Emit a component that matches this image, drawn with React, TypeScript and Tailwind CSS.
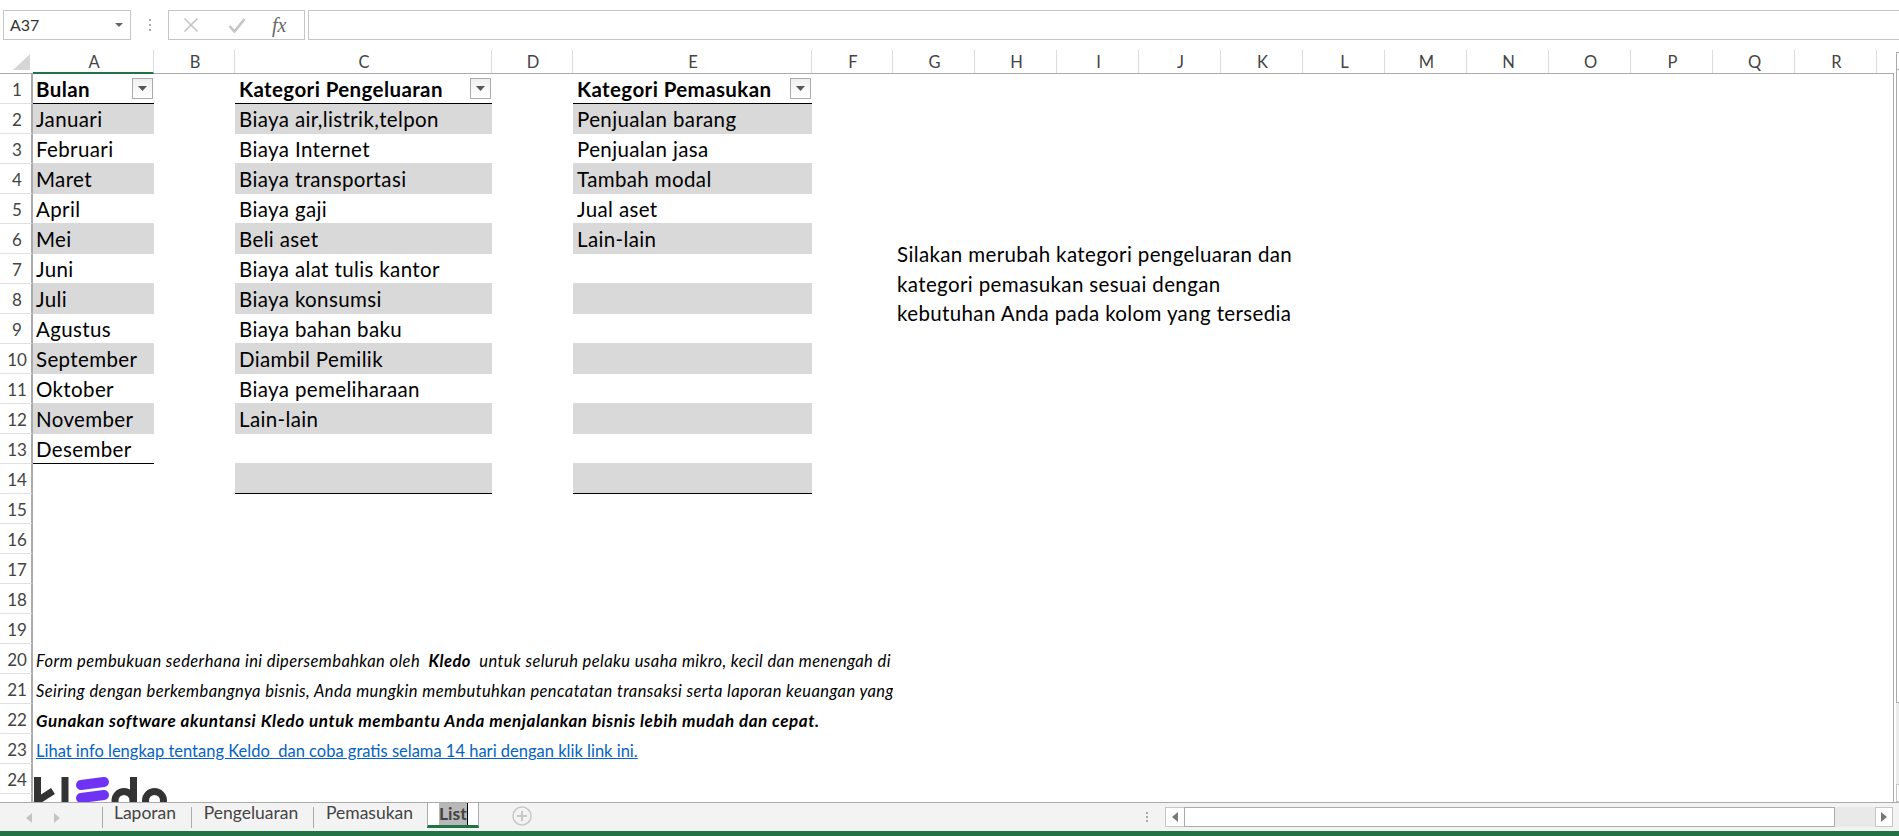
const COLUMNS = [
  { label: "A", width: "w-[121px]" },
  { label: "B", width: "w-[81px]" },
  { label: "C", width: "w-[257px]" },
  { label: "D", width: "w-[81px]" },
  { label: "E", width: "w-[239px]" },
  { label: "F", width: "w-[81px]" },
  { label: "G", width: "w-[82px]" },
  { label: "H", width: "w-[82px]" },
  { label: "I", width: "w-[82px]" },
  { label: "J", width: "w-[82px]" },
  { label: "K", width: "w-[82px]" },
  { label: "L", width: "w-[82px]" },
  { label: "M", width: "w-[82px]" },
  { label: "N", width: "w-[82px]" },
  { label: "O", width: "w-[82px]" },
  { label: "P", width: "w-[82px]" },
  { label: "Q", width: "w-[82px]" },
  { label: "R", width: "w-[82px]" },
];

const BULAN = ["Januari", "Februari", "Maret", "April", "Mei", "Juni", "Juli", "Agustus", "September", "Oktober", "November", "Desember"];
const PENGELUARAN = ["Biaya air,listrik,telpon", "Biaya Internet", "Biaya transportasi", "Biaya gaji", "Beli aset", "Biaya alat tulis kantor", "Biaya konsumsi", "Biaya bahan baku", "Diambil Pemilik", "Biaya pemeliharaan", "Lain-lain", "", ""];
const PEMASUKAN = ["Penjualan barang", "Penjualan jasa", "Tambah modal", "Jual aset", "Lain-lain", "", "", "", "", "", "", "", ""];

function FilterButton() {
  return (
    <span className="mr-px flex h-[21px] w-[21px] shrink-0 items-center justify-center border border-[#ababab] bg-gradient-to-b from-[#f0f0f0] to-white">
      <svg width="9" height="5" viewBox="0 0 9 5"><path d="M0 0h9L4.5 5z" fill="#555" /></svg>
    </span>
  );
}

function HeaderCell({ width, label, indent }: { width: string; label: string; indent: string }) {
  return (
    <div className={`${width} ${indent} flex h-[30px] items-center justify-between border-b border-black`}>
      <span className="pt-[2px] text-[20.5px] font-bold tracking-[0.4px] text-black">{label}</span>
      <FilterButton />
    </div>
  );
}

function DataCell({ width, text, row, last, shadeAll, indent }: { width: string; text: string; row: number; last: boolean; shadeAll: boolean; indent: string }) {
  const shaded = shadeAll && row % 2 === 0;
  const offset = shaded && row > 2 ? "-mt-px h-[31px] pt-[2px]" : "h-[30px] pt-[1px]";
  return (
    <div className={`${width} ${offset} ${indent} flex items-center text-[20.5px] tracking-[0.37px] text-black ${shaded ? "bg-[#d9d9d9]" : ""} ${last ? "border-b border-black" : ""}`}>
      {text}
    </div>
  );
}

function RowHeader({ n }: { n?: number }) {
  return (
    <div className="flex h-[30px] w-[33px] shrink-0 items-center justify-center border-r-2 border-b border-r-[#ababab] border-b-[#e1e1e1] pl-[3px] pt-[3px] text-[17px] text-[#444]">
      {n}
    </div>
  );
}

function Row({ n, children }: { n?: number; children?: React.ReactNode }) {
  return (
    <div className="flex h-[30px] items-start">
      <RowHeader n={n} />
      {children}
    </div>
  );
}

function FormulaBar() {
  return (
    <div className="flex h-[50px] shrink-0 items-start bg-white pt-[10px]">
      <div className="ml-[3px] flex h-[30px] w-[128px] items-center justify-between border border-[#c6c6c6] pl-[6px] pr-[7px] text-[16px] text-[#333]">
        A37
        <svg width="8" height="4" viewBox="0 0 8 4"><path d="M0 0h8L4 4z" fill="#666" /></svg>
      </div>
      <div className="flex h-[30px] w-[37px] flex-col items-center justify-center gap-[3px]">
        <span className="h-[2px] w-[2px] bg-[#aaa]" />
        <span className="h-[2px] w-[2px] bg-[#aaa]" />
        <span className="h-[2px] w-[2px] bg-[#aaa]" />
      </div>
      <div className="flex h-[30px] w-[137px] items-center border border-[#c6c6c6] pl-[14px]">
        <svg width="16" height="16" viewBox="0 0 16 16" className="shrink-0">
          <path d="M1.5 1.5l13 13M14.5 1.5l-13 13" stroke="#c4c4c4" strokeWidth="1.6" fill="none" />
        </svg>
        <svg width="18" height="16" viewBox="0 0 18 16" className="ml-[29px] shrink-0">
          <path d="M1.5 9l5 5.5L16.5 2" stroke="#c4c4c4" strokeWidth="2.6" fill="none" />
        </svg>
        <span className="ml-[26px] font-['Liberation_Serif',serif] text-[20px] leading-none text-[#666] italic">fx</span>
      </div>
      <div className="ml-[3px] h-[30px] flex-1 border-y border-l border-[#c6c6c6]" />
    </div>
  );
}

function ColumnHeaders() {
  return (
    <div className="flex h-[24px] shrink-0 items-stretch border-b border-[#ababab]">
      <div className="flex w-[33px] shrink-0 items-end justify-end pb-[3px] pr-[3px]">
        <svg width="17" height="16" viewBox="0 0 17 16"><path d="M17 0v16H0z" fill="#d6d6d6" /></svg>
      </div>
      {COLUMNS.map((col, i) => (
        <div
          key={col.label}
          className={`${col.width} flex items-center justify-center border-r border-[#dcdcdc] pl-[2px] pt-[2px] text-[16.5px] text-[#444] ${i === 0 ? "-mb-px border-b-2 border-b-[#217346]" : ""}`}
        >
          {col.label}
        </div>
      ))}
    </div>
  );
}

function KledoLogo() {
  return (
    <svg className="absolute left-[30px] top-[702px]" width="145" height="40" viewBox="0 0 145 40">
      <g fill="none" stroke="#333" strokeWidth="7">
        <path d="M7.5 1v40" />
        <path d="M9 24l14-9" />
        <path d="M35 1v40" />
        <circle cx="94" cy="24.5" r="9" />
        <path d="M103.5 1v34" />
        <circle cx="124.5" cy="24.5" r="9" />
      </g>
      <g fill="none" stroke="#7033f5" strokeWidth="10" strokeLinecap="round">
        <path d="M51 9l23-3" />
        <path d="M51 22l23-3" />
      </g>
    </svg>
  );
}

function Sheet() {
  return (
    <div className="relative flex-1 overflow-hidden border-r border-[#ababab] bg-white">
      <Row n={1}>
        <HeaderCell width={COLUMNS[0].width} indent="pl-[3px]" label="Bulan" />
        <div className={COLUMNS[1].width} />
        <HeaderCell width={COLUMNS[2].width} indent="pl-[4px]" label="Kategori Pengeluaran" />
        <div className={COLUMNS[3].width} />
        <HeaderCell width={COLUMNS[4].width} indent="pl-[4px]" label="Kategori Pemasukan" />
      </Row>
      {PENGELUARAN.map((item, i) => {
        const n = i + 2;
        return (
          <Row key={n} n={n}>
            <DataCell width={COLUMNS[0].width} indent="pl-[3px]" text={BULAN[i] ?? ""} row={n} last={n === 13} shadeAll={n <= 13} />
            <div className={COLUMNS[1].width} />
            <DataCell width={COLUMNS[2].width} indent="pl-[4px]" text={item} row={n} last={n === 14} shadeAll />
            <div className={COLUMNS[3].width} />
            <DataCell width={COLUMNS[4].width} indent="pl-[4px]" text={PEMASUKAN[i]} row={n} last={n === 14} shadeAll />
          </Row>
        );
      })}
      {[15, 16, 17, 18, 19].map((n) => (
        <Row key={n} n={n} />
      ))}
      <Row n={20}>
        <div className="flex h-[30px] w-[860px] items-center overflow-hidden whitespace-pre pl-[3px] pt-[4px] text-[16.5px] tracking-[0.41px] text-black italic">
          Form pembukuan sederhana ini dipersembahkan oleh  <b>Kledo</b>  untuk seluruh pelaku usaha mikro, kecil dan menengah di
        </div>
      </Row>
      <Row n={21}>
        <div className="flex h-[30px] w-[860px] items-center overflow-hidden whitespace-pre pl-[3px] pt-[4px] text-[16.5px] tracking-[0.42px] text-black italic">
          Seiring dengan berkembangnya bisnis, Anda mungkin membutuhkan pencatatan transaksi serta laporan keuangan yang
        </div>
      </Row>
      <Row n={22}>
        <div className="flex h-[30px] w-[860px] items-center overflow-hidden whitespace-pre pl-[3px] pt-[4px] text-[17px] font-bold tracking-[0.56px] text-black italic">
          Gunakan software akuntansi Kledo untuk membantu Anda menjalankan bisnis lebih mudah dan cepat.
        </div>
      </Row>
      <Row n={23}>
        <div className="flex h-[30px] w-[860px] items-center overflow-hidden whitespace-pre pl-[3px] pt-[4px] text-[16.5px] text-[#0563c1] underline">
          Lihat info lengkap tentang Keldo  dan coba gratis selama 14 hari dengan klik link ini.
        </div>
      </Row>
      <Row n={24} />
      <Row />
      <div className="absolute left-[897px] top-[165px] pt-px text-[20.5px] leading-[29.7px] tracking-[0.37px] text-black">
        <p>Silakan merubah kategori pengeluaran dan</p>
        <p>kategori pemasukan sesuai dengan</p>
        <p>kebutuhan Anda pada kolom yang tersedia</p>
      </div>
      <KledoLogo />
    </div>
  );
}

function VerticalScrollbar() {
  return (
    <div className="flex w-[5px] shrink-0 flex-col items-end bg-white pt-[2px]">
      <div className="h-[18px] w-[3px] border-y border-l border-[#ababab]" />
      <div className="h-[633px] w-[3px] border-b border-l border-[#ababab] bg-white" />
      <div className="h-[81px] w-[3px] bg-[#ececec]" />
      <div className="h-[18px] w-[3px] border-y border-l border-[#c6c6c6] bg-white" />
    </div>
  );
}

function Tab({ label, width, inset, divider }: { label: string; width: string; inset: string; divider: boolean }) {
  return (
    <div className={`${width} ${inset} ${divider ? "border-r border-[#ababab]" : ""} flex h-[21px] items-center justify-center pb-[8px] text-[17.5px] text-[#444]`}>
      {label}
    </div>
  );
}

function TabBar() {
  return (
    <div className="flex h-[29px] shrink-0 items-start border-t border-[#ababab] bg-[#f3f3f3] pr-[6px]">
      <div className="mt-[4px] flex h-[21px] w-[103px] items-center border-r border-[#ababab] pl-[25px]">
        <svg width="8" height="12" viewBox="0 0 8 12"><path d="M7 1v10L1 6z" fill="#c4c4c4" /></svg>
        <svg className="ml-[20px]" width="8" height="12" viewBox="0 0 8 12"><path d="M1 1v10l6-5z" fill="#c4c4c4" /></svg>
      </div>
      <div className="mt-[4px] flex">
        <Tab label="Laporan" width="w-[89px]" inset="pr-[4px]" divider />
        <Tab label="Pengeluaran" width="w-[122px]" inset="pr-[3px]" divider />
        <Tab label="Pemasukan" width="w-[113px]" inset="pr-[2px]" divider={false} />
      </div>
      <div className="-mt-px flex h-[26px] w-[52px] items-start border-x border-t border-b-[3px] border-x-[#ababab] border-t-[#ababab] border-b-[#217346] bg-white pl-[11px]">
        <span className="h-[22px] bg-[#b8b8b8] text-[17.5px] leading-[22px] font-bold text-[#444]">List</span>
        <span className="h-[22px] w-px bg-black" />
      </div>
      <svg className="ml-[33px] mt-[3px]" width="20" height="20" viewBox="0 0 20 20">
        <circle cx="10" cy="10" r="9" fill="none" stroke="#c8c8c8" strokeWidth="1.5" />
        <path d="M10 5v10M5 10h10" stroke="#c8c8c8" strokeWidth="2" />
      </svg>
      <div className="ml-[614px] mt-[8px] flex h-[12px] flex-col items-center justify-center gap-[2px]">
        <span className="h-[2px] w-[2px] bg-[#aaa]" />
        <span className="h-[2px] w-[2px] bg-[#aaa]" />
        <span className="h-[2px] w-[2px] bg-[#aaa]" />
      </div>
      <div className="ml-auto mt-[4px] flex h-[20px] w-[728px]">
        <div className="flex w-[19px] items-center justify-center border border-r-0 border-[#c6c6c6] bg-white">
          <svg width="6" height="10" viewBox="0 0 6 10"><path d="M6 0v10L0 5z" fill="#777" /></svg>
        </div>
        <div className="w-[651px] border border-[#ababab] bg-white" />
        <div className="flex-1 bg-[#e9e9e9]" />
        <div className="flex w-[18px] items-center justify-center border border-[#c6c6c6] bg-white">
          <svg width="6" height="10" viewBox="0 0 6 10"><path d="M0 0v10l6-5z" fill="#777" /></svg>
        </div>
      </div>
    </div>
  );
}

export default function App() {
  return (
    <div className="flex h-[836px] w-[1899px] flex-col overflow-hidden bg-white [font-family:Lato,sans-serif]">
      <FormulaBar />
      <div className="flex min-h-0 flex-1">
        <div className="flex min-w-0 flex-1 flex-col">
          <ColumnHeaders />
          <Sheet />
        </div>
        <VerticalScrollbar />
      </div>
      <TabBar />
      <div className="h-[5px] shrink-0 bg-[#217346]" />
    </div>
  );
}
